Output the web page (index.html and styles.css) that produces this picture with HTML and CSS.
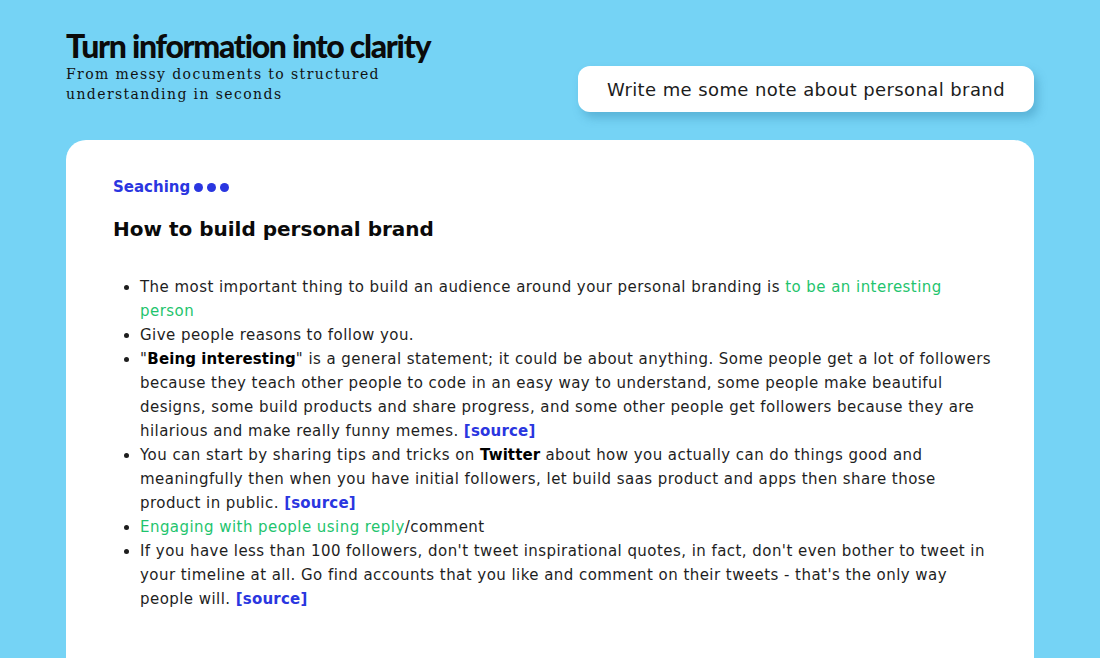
FILE: index.html
```html
<!DOCTYPE html>
<html lang="en">
<head>
<meta charset="utf-8">
<title>Turn information into clarity</title>
<link rel="stylesheet" href="styles.css">
</head>
<body>
<div class="page">
  <header class="top">
    <div class="brand">
      <h1 class="title">Turn information into clarity</h1>
      <p class="subtitle">From messy documents to structured<br>understanding in seconds</p>
    </div>
    <div class="prompt">Write me some note about personal brand</div>
  </header>
  <main class="card">
    <div class="status">Seaching <span class="dots"><i></i><i></i><i></i></span></div>
    <h2 class="heading">How to build personal brand</h2>
    <ul class="notes">
      <li>The most important thing to build an audience around your personal branding is <span class="hl">to be an interesting person</span></li>
      <li>Give people reasons to follow you.</li>
      <li>"<b>Being interesting</b>" is a general statement; it could be about anything. Some people get a lot of followers because they teach other people to code in an easy way to understand, some people make beautiful designs, some build products and share progress, and some other people get followers because they are hilarious and make really funny memes. <a class="src">[source]</a></li>
      <li>You can start by sharing tips and tricks on <b>Twitter</b> about how you actually can do things good and meaningfully then when you have initial followers, let build saas product and apps then share those product in public. <a class="src">[source]</a></li>
      <li><span class="hl">Engaging with people using reply</span>/comment</li>
      <li>If you have less than 100 followers, don't tweet inspirational quotes, in fact, don't even bother to tweet in your timeline at all. Go find accounts that you like and comment on their tweets - that's the only way people will. <a class="src">[source]</a></li>
    </ul>
  </main>
</div>
</body>
</html>
```

FILE: styles.css
```css
html, body {
  margin: 0;
  padding: 0;
  background: #75d3f5;
  height: 100%;
  overflow: hidden;
}
.page {
  padding: 28px 66px 0 66px;
  font-family: "DejaVu Sans", sans-serif;
}
.top {
  display: flex;
  justify-content: space-between;
  align-items: flex-end;
}
.title {
  margin: 0;
  font-family: "Lato", sans-serif;
  font-weight: 900;
  font-size: 32px;
  letter-spacing: -1.3px;
  line-height: 36px;
  color: #0b0b0b;
}
.subtitle {
  margin: 0;
  font-family: "DejaVu Serif", serif;
  font-size: 14px;
  line-height: 20px;
  letter-spacing: 1.4px;
  color: #111;
}
.prompt {
  background: #fff;
  border-radius: 12px;
  width: 456px;
  height: 46px;
  display: flex;
  align-items: center;
  justify-content: center;
  font-size: 18px;
  letter-spacing: 0.4px;
  color: #1c1c1c;
  box-shadow: 4px 6px 10px rgba(40, 120, 160, 0.35);
  margin-bottom: -8px;
}
.card {
  margin-top: 36px;
  background: #fff;
  border-radius: 20px;
  padding: 37px 36px 40px 47px;
  min-height: 600px;
}
.status {
  display: flex;
  align-items: center;
  gap: 4px;
  font-size: 15px;
  font-weight: bold;
  color: #2a36e0;
  line-height: 20px;
}
.dots {
  display: inline-flex;
  gap: 4px;
  padding-top: 1px;
}
.dots i {
  width: 9px;
  height: 9px;
  border-radius: 50%;
  background: #2a36e0;
}
.heading {
  margin: 17px 0 0 0;
  font-size: 20px;
  line-height: 30px;
  color: #0a0a0a;
}
.notes {
  margin: 31px 0 0 0;
  padding-left: 27px;
  font-size: 15px;
  letter-spacing: 0.45px;
  line-height: 24px;
  color: #1e1e1e;
}
.notes b {
  color: #000;
  letter-spacing: 0.1px;
}
.hl {
  color: #1fc46e;
}
.src {
  color: #2a36e0;
  font-weight: bold;
  letter-spacing: 0.2px;
}
```
